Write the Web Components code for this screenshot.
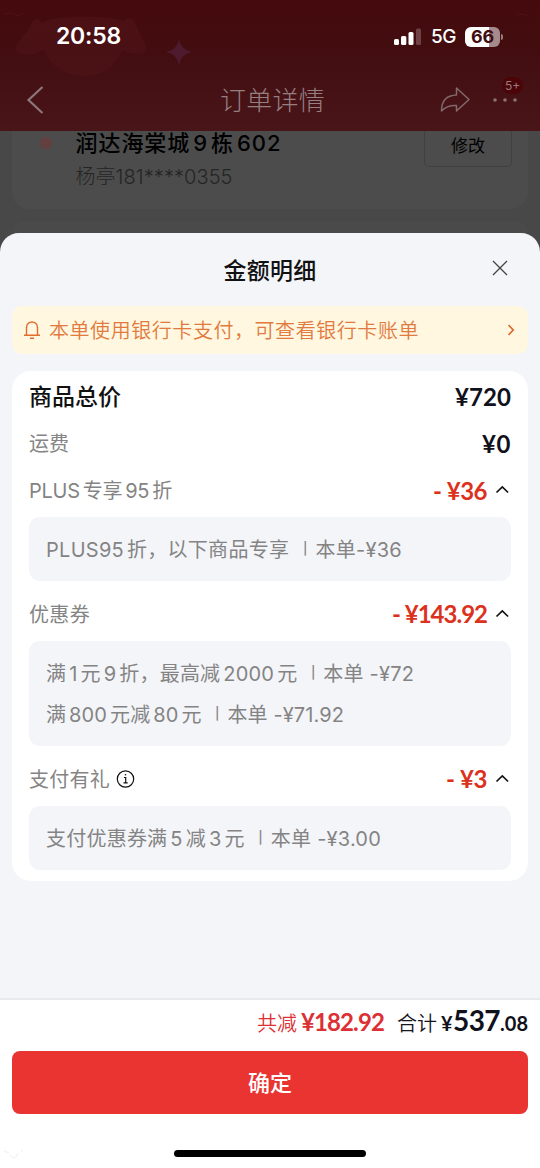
<!DOCTYPE html>
<html lang="zh-CN">
<head>
<meta charset="utf-8">
<title>订单详情</title>
<style>
html,body{margin:0;height:100%}
body{width:540px;height:1168px;overflow:hidden;background:#484848;font-family:Inter,"Noto Sans CJK SC",sans-serif;font-size:20px;line-height:1}
</style>
</head>
<body>
<order-app></order-app>
<script>
const define = (name, html, after) => {
  const t = document.createElement('template');
  t.innerHTML = html;
  customElements.define(name, class extends HTMLElement {
    connectedCallback() {
      if (this.shadowRoot) return;
      this.attachShadow({mode:'open'}).append(t.content.cloneNode(true));
      if (after) after(this);
    }
  });
};

/* Text run whose tracking is adjusted to fill the width in the "w" attribute. */
define('fit-text', `<style>:host{display:block;white-space:pre;flex:none}span{display:inline-block}::slotted(i){font-style:normal;margin:0 3px}::slotted(i.end){margin-right:0}::slotted(s){text-decoration:none;font-size:16px;margin:0 2px;position:relative;top:-3px}</style><span><slot></slot></span>`, el => {
  const s = el.shadowRoot.querySelector('span'), w = +el.getAttribute('w');
  if (!w) return;
  const n = [...el.textContent].length;
  const gap = (w - s.getBoundingClientRect().width) / n;
  s.style.letterSpacing = gap + 'px';
  el.style.width = w + 'px';
});

define('status-bar', `<style>
:host{display:flex;height:73px;align-items:center;color:#fff;padding:0 37px 0 56px;box-sizing:border-box}
.time{font-size:23px;font-weight:600;margin-right:auto}
.g{font-size:19px;font-weight:500;margin:0 9px 0 9px}
svg{display:block}
.bat{display:flex;align-items:center;justify-content:center;width:35px;height:20px;border-radius:6px;background:linear-gradient(90deg,#fff 69%,#a68a8c 69%);color:#400d10;font-size:18px;font-weight:700}
.tip{width:2px;height:6px;margin-left:1px;border-radius:0 3px 3px 0;background:#977b7d}
</style>
<fit-text class="time" w="65">20:58</fit-text>
<svg width="28" height="18" viewBox="0 0 28 18"><g fill="#fff"><rect x="0" y="11" width="5" height="6" rx="1.5"/><rect x="7" y="8" width="5.3" height="9" rx="1.5"/><rect x="14.5" y="4" width="5" height="13" rx="1.5"/></g><rect x="22" y="0.5" width="5" height="16.5" rx="1.5" fill="#714044"/></svg>
<fit-text class="g" w="25">5G</fit-text>
<div class="bat"><fit-text w="23">66</fit-text></div><div class="tip"></div>`);

define('nav-bar', `<style>
:host{display:flex;height:131px;flex-direction:column;position:relative;background:linear-gradient(#450a0d 0,#430d10 35%,#481519 100%);color:#8c7375}
.art{position:absolute;left:0;top:0}
status-bar{position:relative}
.row{display:grid;grid-template-columns:220px 1fr 100px;height:54px;align-items:center;position:relative}
.back{margin-left:26px;display:block}
.right{display:flex;align-items:center;gap:21px}
.badge{position:absolute;right:17px;top:4px;width:21px;height:17px;border-radius:9px;background:#4b0508;color:#957c7d;font-size:12px;display:flex;align-items:center;justify-content:center}
.title{font-size:26px;font-weight:300;padding-top:1px;color:#967f81}
</style>
<svg class="art" width="540" height="131" viewBox="0 0 540 131"><path d="M42 23C49 16 103 14 124 21C128 16 135 18 136 25Q140 36 145 43Q149 53 139 54Q130 54 122 50Q112 76 84 76Q55 75 44 50Q29 58 17 52Q13 47 22 38Q27 33 31 24Q36 15 42 23Z" fill="#511519" opacity=".5"/><path d="M179 39Q181 50 192 52Q181 54 179 65Q177 54 166 52Q177 50 179 39Z" fill="#4d1b2d"/><path d="M5 14Q13 11 17 16L23 13M516 15Q524 13 529 17" stroke="#53191c" fill="none" opacity=".6"/></svg>
<status-bar></status-bar>
<div class="row"><svg class="back" width="20" height="30" viewBox="0 0 20 30" fill="none" stroke="#8c7779" stroke-width="2.2"><path d="M16.5 2L2.5 15L16.5 28"/></svg><fit-text class="title" w="105">订单详情</fit-text>
<div class="right"><svg width="31" height="29" viewBox="0 0 31 29" fill="none" stroke="#82696b" stroke-width="1.5" stroke-linejoin="round"><path d="M16.5 2L29 13.5L16.5 25V19.500Q7 19 1.500 25Q1.500 9.500 16.500 9Z"/></svg><svg width="27" height="8" viewBox="0 0 27 8" fill="#8a7375"><circle cx="3" cy="4" r="1.8"/><circle cx="13" cy="4" r="1.8"/><circle cx="23" cy="4" r="1.8"/></svg></div>
<div class="badge">5+</div></div>`);

define('address-card', `<style>
:host{display:flex;margin:0 12px;height:78px;background:#4c4c4c;border-radius:0 0 17px 17px;box-sizing:border-box;padding-left:28px;color:#000}
.dot{width:12px;height:12px;border-radius:50%;background:#633f40;margin-top:6px;margin-right:23.500px}
.a{font-size:22px;font-weight:500;height:24px;line-height:24px}
.b{color:#252525;font-weight:300;height:24px;line-height:24px;margin-top:10px}
.copy{flex:1}
.btn{width:88px;height:36px;box-sizing:border-box;border:1.500px solid #404040;border-top:0;border-radius:0 0 5px 5px;margin-right:16px;display:flex;align-items:center;justify-content:center;font-size:17px;padding-bottom:4px}
</style><div class="dot"></div><div class="copy"><fit-text class="a" w="209">润达海棠城<i>9</i>栋<i>602</i></fit-text><fit-text class="b" w="157">杨亭181****0355</fit-text></div><div class="btn">修改</div>`);

define('bank-notice', `<style>
:host{display:flex;align-items:center;height:48px;box-sizing:border-box;margin:0 12px;padding:0 13px 0 11px;border-radius:10px;background:#fff7df;color:#e27a40}
fit-text{font-weight:350;margin-left:8px;margin-right:auto;padding-top:2px}
</style><svg width="18" height="20" viewBox="0 0 18 20" fill="none" stroke="#e46c2d" stroke-width="1.400"><path d="M3.500 15V7.500A5.500 5.500 0 0 1 14.500 7.500V15M1 15.200H17M7 18.300H11"/></svg><fit-text w="370">本单使用银行卡支付，可查看银行卡账单</fit-text><svg width="8" height="14" viewBox="0 0 8 14" fill="none" stroke="#da6a30" stroke-width="1.700"><path d="M1.500 2L6.200 7L1.500 12"/></svg>`);

define('price-value', `<style>:host{display:block;color:#10111a;font:700 24px/1 Lato,Inter,sans-serif}:host([red]){color:#dc321d}</style><slot></slot>`);

define('detail-row', `<style>
:host{display:flex;align-items:center;justify-content:space-between;box-sizing:border-box;height:var(--h,53px);padding:var(--p,0) 0 0;color:#848484}
.l,.r{display:flex;align-items:center}.r svg{display:none;margin:-1px 1px 0 8px}:host([open]) .r svg{display:block}
.l{gap:6px}
</style><div class="l"><slot name="label"></slot></div><div class="r"><slot name="value"></slot><svg width="15" height="10" viewBox="0 0 15 10" fill="none" stroke="#111" stroke-width="1.700"><path d="M1.500 7.500L7.300 2L13.100 7.500"/></svg></div>`);

define('detail-box', `<style>:host{display:flex;flex-direction:column;justify-content:center;box-sizing:border-box;gap:21px;padding:1px 17px 0;height:64px;border-radius:11px;background:#f4f5f9;color:#848484;font-weight:400}:host([tall]){height:105px}</style><slot></slot>`);

define('info-icon', `<style>:host{display:block;height:19px}svg{display:block}</style><svg width="19" height="19" viewBox="0 0 19 19" fill="none" stroke="#111" stroke-width="1.200"><circle cx="9.500" cy="9" r="8.200"/><path d="M8 7.500H9.700V12.800M7.500 12.800H11.700"/><circle cx="9.500" cy="4.800" r=".8" fill="#111" stroke="none"/></svg>`);

define('amount-card', `<style>
:host{display:block;box-sizing:border-box;height:510px;margin:17px 12px 0;padding:0 17px;border-radius:19px;background:#fff}
.label{font-weight:400;padding-top:1px}
.bold{font-size:23px;font-weight:500;color:#111}
</style>
<detail-row style="--h:52px"><fit-text slot="label" class="bold" w="92">商品总价</fit-text><price-value slot="value"><fit-text w="56">¥720</fit-text></price-value></detail-row>
<detail-row style="--h:41px"><fit-text slot="label" class="label" w="40">运费</fit-text><price-value slot="value"><fit-text w="29">¥0</fit-text></price-value></detail-row>
<detail-row open><fit-text slot="label" class="label" w="146">PLUS<i>专享</i>95<i>折</i></fit-text><price-value slot="value" red><fit-text w="54">- ¥36</fit-text></price-value></detail-row>
<detail-box><fit-text w="356">PLUS95<i class="end">折</i>，以下商品专享 <s>丨</s>本单-¥36</fit-text></detail-box>
<detail-row open style="--h:60px;--p:6px"><fit-text slot="label" class="label" w="61">优惠券</fit-text><price-value slot="value" red><fit-text w="95">- ¥143.92</fit-text></price-value></detail-row>
<detail-box tall><fit-text w="368">满<i>1</i>元<i>9</i>折，最高减<i>2000</i>元 <s>丨</s>本单 -¥72</fit-text><fit-text w="298">满<i>800</i>元减<i>80</i>元 <s>丨</s>本单 -¥71.92</fit-text></detail-box>
<detail-row open style="--h:60px;--p:6px"><fit-text slot="label" class="label" w="81">支付有礼</fit-text><info-icon slot="label"></info-icon><price-value slot="value" red><fit-text w="41">- ¥3</fit-text></price-value></detail-row>
<detail-box><fit-text w="335">支付优惠券满<i>5</i>减<i>3</i>元 <s>丨</s>本单 -¥3.00</fit-text></detail-box>`);

define('sheet-footer', `<style>
:host{display:block;height:170px;box-sizing:border-box;border-top:2px solid #e9eaee;background:#fff;margin-top:auto;padding:0 12px;position:relative}
.sum{display:flex;align-items:baseline;justify-content:flex-end;height:51px;padding-top:6px;box-sizing:border-box}
.red{color:#dc3034;font-weight:350}.p{font:700 24px/28px Lato,Inter,sans-serif}
.k{color:#15151c;font-weight:350}.price{color:#10111a;display:flex;align-items:baseline;font-family:Lato,Inter,sans-serif;font-weight:700}
button{display:block;width:100%;height:63px;border:0;border-radius:8px;background:#e93432;color:#fff;font:500 22px/1 "Noto Sans CJK SC",sans-serif;padding:0 0 4px}
.home{width:192px;height:7px;border-radius:4px;background:#000;margin:36px auto 0}
svg{position:absolute;left:3px;bottom:8px}
</style><div class="sum"><fit-text class="red" w="40">共减</fit-text><fit-text class="red p" w="83" style="margin-left:4px">¥182.92</fit-text><fit-text class="k" w="40" style="margin-left:13px">合计</fit-text><div class="price" style="margin-left:4px"><fit-text w="12" style="font-size:20px">¥</fit-text><fit-text w="47" style="font-size:28px">537</fit-text><fit-text w="28" style="font-size:20px">.08</fit-text></div></div><button>确定</button><div class="home"></div><svg width="22" height="12" viewBox="0 0 22 12" fill="none" stroke="#f4f4f4" stroke-width="1.500"><path d="M1 3L6 5M7 7Q12 13 15 5M18 3H20"/></svg>`);

define('amount-sheet', `<style>
:host{display:flex;flex-direction:column;height:935px;background:#f4f5f9;border-radius:19px 19px 0 0;overflow:hidden}
header{display:grid;grid-template-columns:1fr auto 1fr;align-items:center;height:73px;flex:none}
.t{grid-column:2;font-size:23px;font-weight:500;color:#111;padding-top:3px}
svg{justify-self:end;margin-right:32px;margin-top:-3px}
bank-notice{flex:none}
amount-card{flex:none}
</style><header><fit-text class="t" w="93">金额明细</fit-text><svg width="16" height="16" viewBox="0 0 16 16" fill="none" stroke="#444" stroke-width="1.300"><path d="M1 1L15 15M15 1L1 15"/></svg></header><bank-notice></bank-notice><amount-card></amount-card><sheet-footer></sheet-footer>`);

define('order-app', `<style>
:host{display:flex;flex-direction:column;width:540px;height:1168px;overflow:hidden;background:#484848}
.peek{height:12px;margin:12px 12px 0;border-radius:12px 12px 0 0;background:#4a4a4a}
amount-sheet{flex:none}nav-bar,address-card{flex:none}
</style><nav-bar></nav-bar><address-card></address-card><div class="peek"></div><amount-sheet></amount-sheet>`);
</script>
</body>
</html>
